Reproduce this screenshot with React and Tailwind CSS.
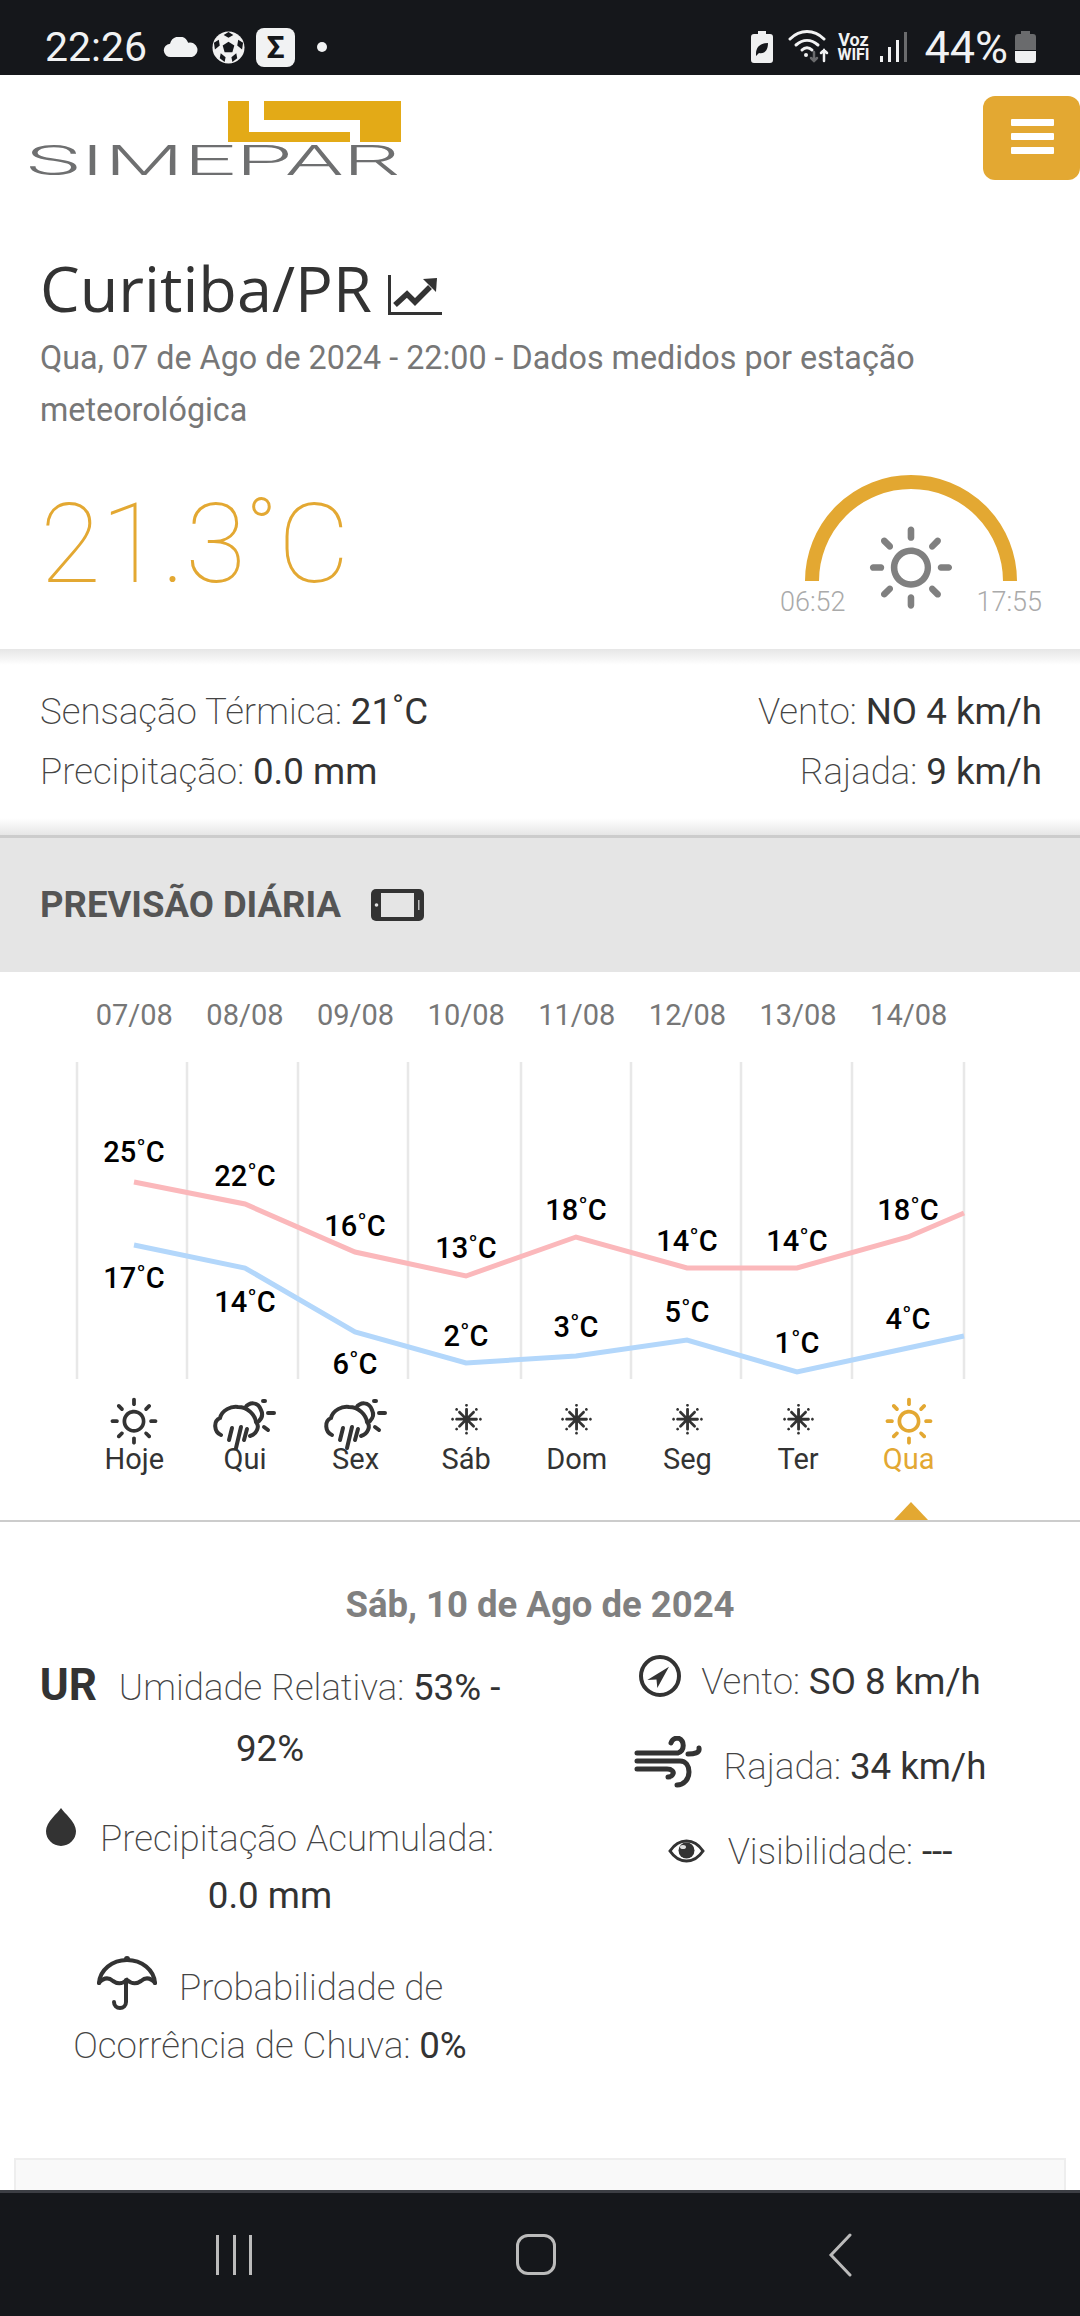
import { WiDaySunny, WiSnowflakeCold } from 'react-icons/wi';

const DATES = ['07/08', '08/08', '09/08', '10/08', '11/08', '12/08', '13/08', '14/08'];
const GRID_X = [77, 187, 298, 408, 521, 631, 741, 852, 964];
const XS = [134, 245, 355, 466, 576, 687, 797, 908];
const RED = [1182, 1204, 1252, 1276, 1237, 1268, 1268, 1237];
const BLUE = [1245, 1268, 1332, 1363, 1356, 1340, 1372, 1348];
const HIGHS = [
  ['25', 1162], ['22', 1186], ['16', 1236], ['13', 1258],
  ['18', 1220], ['14', 1251], ['14', 1251], ['18', 1220],
];
const LOWS = [
  ['17', 1288], ['14', 1312], ['6', 1374], ['2', 1346],
  ['3', 1337], ['5', 1322], ['1', 1353], ['4', 1329],
];
const DAYS = [
  ['Hoje', 'sun'], ['Qui', 'rain'], ['Sex', 'rain'], ['Sáb', 'cold'],
  ['Dom', 'cold'], ['Seg', 'cold'], ['Ter', 'cold'], ['Qua', 'sun'],
];

const toPoints = (ys, endY) =>
  XS.map((x, i) => `${x},${ys[i] - 1040}`).join(' ') + ` 964,${endY - 1040}`;

function Logo() {
  return (
    <svg width="380" height="90" viewBox="25 100 380 90" className="block">
      <path d="M228 101H249V132H350V142H228Z" fill="#e3aa17" />
      <path d="M264 101H401V142H360V120H264Z" fill="#e3aa17" />
      <text
        x="26"
        y="175"
        textLength="375"
        lengthAdjust="spacingAndGlyphs"
        fontFamily="Roboto, sans-serif"
        fontWeight="300"
        fontSize="42"
        fill="#6e6f70"
      >
        SIMEPAR
      </text>
    </svg>
  );
}

function SoccerBall() {
  return (
    <svg width="33" height="33" viewBox="0 0 34 34">
      <circle cx="17" cy="17" r="16.500" fill="#f1f1f1" />
      <path d="M17 11l6 4-2 7h-8l-2-7z" fill="#15171b" />
      <path d="M17 1l5 3-5 3-5-3zM2 12l5-3 1 6-5 4zM32 12l-5-3-1 6 5 4zM8 28l1-5 5 4-1 5zM26 28l-1-5-5 4 1 5z" fill="#15171b" />
    </svg>
  );
}

function StatusBar() {
  return (
    <div className="flex h-[75px] shrink-0 items-center bg-[#15171b] pl-[45px] pr-[44px] pt-[19px] text-[#f1f2f3]">
      <span className="text-[41px] leading-none font-normal">22:26</span>
      <svg width="36" height="21" viewBox="0 0 37 22" className="ml-[16px]">
        <path d="M8 21a7 7 0 0 1-1-14 10 10 0 0 1 19-1 7.500 7.500 0 0 1 4 15z" fill="#f1f2f3" />
      </svg>
      <div className="ml-[13px]"><SoccerBall /></div>
      <div className="ml-[11px] flex h-[39px] w-[39px] items-center justify-center rounded-[8px] bg-[#f1f2f3] text-[32px] leading-none font-bold text-[#15171b]">Σ</div>
      <div className="ml-[22px] h-[10px] w-[10px] rounded-full bg-[#f1f2f3]" />
      <div className="ml-auto flex items-center">
        <svg width="22" height="32" viewBox="0 0 22 32">
          <path d="M7 0h8v3h4a3 3 0 0 1 3 3v23a3 3 0 0 1-3 3H3a3 3 0 0 1-3-3V6a3 3 0 0 1 3-3h4z" fill="#eff0f1" />
          <path d="M5 23c0-8 5-11 12-11 0 8-4 11-9 10l-3 3" fill="#15171b" />
        </svg>
        <svg width="42" height="34" viewBox="0 0 42 34" fill="none" stroke="#f1f2f3" strokeLinecap="round" className="ml-[15px]">
          <path d="M2 9c10-10 24-10 34 0" strokeWidth="3" />
          <path d="M8 15c7-6 15-6 22 0" strokeWidth="3" />
          <path d="M14 20c3-3 7-3 10 0" strokeWidth="3" />
          <circle cx="18" cy="25" r="2" fill="#f1f2f3" stroke="none" />
          <path d="M26 22v9M23 28l3 3 3-3" stroke="#6a6b6d" strokeWidth="2.500" />
          <path d="M36 31v-11M33 23l3-3 3 3" strokeWidth="2.500" />
        </svg>
        <div className="ml-[7px] flex w-[32px] flex-col items-center text-[16px] leading-[15px] font-bold">
          <span className="text-[18px]">Voz</span>
          <span>WIFI</span>
        </div>
        <div className="ml-[11px] flex h-[30px] items-end gap-[5px]">
          <div className="h-[6px] w-[3px] bg-[#f1f2f3]" />
          <div className="h-[15px] w-[3px] bg-[#f1f2f3]" />
          <div className="h-[22px] w-[3px] bg-[#f1f2f3]" />
          <div className="h-[30px] w-[3px] bg-[#6a6b6d]" />
        </div>
        <span className="ml-[17px] text-[45px] leading-none font-normal">44%</span>
        <svg width="21" height="32" viewBox="0 0 21 32" className="ml-[7px]">
          <path d="M6 0h9v3h3a3 3 0 0 1 3 3v13H0V6a3 3 0 0 1 3-3h3z" fill="#6a6b6d" />
          <path d="M0 20h21v9a3 3 0 0 1-3 3H3a3 3 0 0 1-3-3z" fill="#eff0f1" />
        </svg>
      </div>
    </div>
  );
}

function SunArc() {
  return (
    <div className="relative h-[146px] w-[262px]">
      <svg width="262" height="146" viewBox="0 0 262 146" className="absolute inset-0">
        <path d="M32 107a99 99 0 0 1 198 0" fill="none" stroke="#e3a832" strokeWidth="14" />
      </svg>
      <WiDaySunny size={116} color="#808080" className="absolute left-[73px] top-[37px]" />
      <span className="absolute left-0 top-[113px] text-[27px] leading-[30px] font-light text-[#aaa]">06:52</span>
      <span className="absolute right-0 top-[113px] text-[27px] leading-[30px] font-light text-[#aaa]">17:55</span>
    </div>
  );
}

function Chart() {
  return (
    <svg width="1080" height="345" viewBox="0 0 1080 345" className="block">
      {GRID_X.map((x) => (
        <line key={x} x1={x} x2={x} y1="22" y2="339" stroke="#e8e8e8" strokeWidth="2.500" />
      ))}
      <polyline points={toPoints(RED, 1213)} fill="none" stroke="#fbb8bb" strokeWidth="5" />
      <polyline points={toPoints(BLUE, 1336)} fill="none" stroke="#b3d7fb" strokeWidth="5" />
      {[...HIGHS, ...LOWS].map(([t, y], i) => (
        <text key={i} x={XS[i % 8]} y={y - 1040} textAnchor="middle" fontFamily="Roboto, sans-serif" fontWeight="500" fontSize="29" fill="#000">
          {t}˚C
        </text>
      ))}
    </svg>
  );
}

function RainIcon() {
  return (
    <svg width="90" height="70" viewBox="0 0 90 70" fill="none" stroke="#333" strokeWidth="4" strokeLinecap="round" className="shrink-0">
      <path d="M21 45C14 42 13 31 20 28 22 20 31 16 38 17 48 17 55 25 56 32 60 36 57 44 50 46" />
      <path d="M45 18C49 12 58 11 61 20 63 24 62 28 59 31" />
      <path d="M68 23h6M64 37l4 3M63 11h2" />
      <path d="M29 50l3-12M36 58l5-21M44 50l3-11" />
    </svg>
  );
}

function DayIcon({ kind, color }) {
  if (kind === 'sun') return <WiDaySunny size={66} color={color} className="mt-[4px] shrink-0" />;
  if (kind === 'rain') return <div className="mt-[5px]"><RainIcon /></div>;
  return <WiSnowflakeCold size={61} color={color} className="mt-[5px] shrink-0" />;
}

function Val({ children }) {
  return <span className="font-normal text-[#333]">{children}</span>;
}

export default function App() {
  return (
    <div className="flex h-[2316px] w-[1080px] flex-col overflow-hidden bg-white font-['Roboto',sans-serif] text-[#333]">
      <StatusBar />

      <main className="flex-1 overflow-hidden">
        <header className="flex h-[172px] items-start justify-between">
          <div className="ml-[25px] mt-[25px]"><Logo /></div>
          <div className="mt-[21px] flex h-[84px] w-[97px] flex-col gap-[7px] rounded-[12px] bg-[#e3a832] pl-[28px] pt-[23px]">
            <div className="h-[7px] w-[43px] rounded-[1px] bg-white" />
            <div className="h-[7px] w-[43px] rounded-[1px] bg-white" />
            <div className="h-[7px] w-[43px] rounded-[1px] bg-white" />
          </div>
        </header>

        <section className="px-[40px]">
          <h1 className="flex items-center font-['Open_Sans',sans-serif] text-[63px] leading-[82px] text-[#333]">
            Curitiba/PR
            <svg width="54" height="40" viewBox="0 0 54 40" className="ml-[16px] mt-[14px]">
              <path d="M1.500 0V38.500H54" fill="none" stroke="#333" strokeWidth="3" />
              <path d="M7 30l12-11 8 8 15-15" fill="none" stroke="#333" strokeWidth="5.500" />
              <path d="M35 4l14-1-1 14z" fill="#333" />
            </svg>
          </h1>
          <p className="mt-[3px] w-[960px] text-[32.300px] leading-[52px] text-[#777]">
            Qua, 07 de Ago de 2024 - 22:00 - Dados medidos por estação meteorológica
          </p>
        </section>

        <section className="flex h-[213px] items-start justify-between pl-[40px] pr-[38px]">
          <div className="mt-[33px] text-[111px] leading-[150px] font-thin text-[#e3a832]">21.3˚C</div>
          <div className="mt-[38px]"><SunArc /></div>
        </section>

        <div className="h-[16px] bg-gradient-to-b from-[#e6e6e6] to-white" />

        <section className="flex justify-between pl-[40px] pr-[38px] pt-[17px] text-[36.700px] leading-[60px] font-extralight text-[#444]">
          <div>
            <div>Sensação Térmica: <Val>21˚C</Val></div>
            <div>Precipitação: <Val>0.0 mm</Val></div>
          </div>
          <div className="text-right">
            <div>Vento: <Val>NO 4 km/h</Val></div>
            <div>Rajada: <Val>9 km/h</Val></div>
          </div>
        </section>

        <div className="mt-[16px] h-[17px] bg-gradient-to-b from-white to-[#e6e6e6]" />

        <section className="flex h-[137px] items-center border-t-[3px] border-[#ccc] bg-[#e5e5e5] pl-[40px]">
          <h2 className="text-[36.500px] font-bold text-[#555]">PREVISÃO DIÁRIA</h2>
          <svg width="53" height="32" viewBox="0 0 53 32" className="ml-[30px]">
            <rect width="53" height="32" rx="5" fill="#333" />
            <rect x="10" y="4" width="33" height="24" fill="#e5e5e5" />
            <circle cx="5.500" cy="16" r="1.800" fill="#e5e5e5" />
            <rect x="47" y="11" width="1.500" height="10" fill="#bbb" />
          </svg>
        </section>

        <div className="ml-[79px] mb-[5px] mt-[23px] grid w-[885px] grid-cols-8 text-center text-[29px] leading-[40px] text-[#777]">
          {DATES.map((d) => <span key={d}>{d}</span>)}
        </div>

        <Chart />

        <div className="ml-[79px] grid w-[885px] grid-cols-8 text-center text-[29px] leading-[34px]">
          {DAYS.map(([label, kind], i) => {
            const last = i === DAYS.length - 1;
            return (
              <div key={label} className={`flex flex-col items-center ${last ? 'text-[#e3a832]' : 'text-[#333]'}`}>
                <div className="flex h-[57px] w-[60px] items-start justify-center">
                  <DayIcon kind={kind} color={last ? '#e3a832' : '#333'} />
                </div>
                <span className="relative">{label}</span>
              </div>
            );
          })}
        </div>

        <div className="relative mt-[44px] border-b-[2px] border-[#ccc]">
          <div className="absolute bottom-0 left-[894px] h-0 w-0 border-x-[17px] border-b-[18px] border-x-transparent border-b-[#e3a832]" />
        </div>

        <h3 className="mt-[61px] text-center text-[36.500px] leading-[44px] font-bold text-[#808080]">Sáb, 10 de Ago de 2024</h3>

        <section className="mt-[28px] grid grid-cols-2 text-center text-[36.700px] font-extralight text-[#444]">
          <div className="px-[30px]">
            <div className="leading-[61px]">
              <b className="mr-[22px] text-[44px] font-bold text-[#333]">UR</b>Umidade Relativa: <Val>53% -<br />92%</Val>
            </div>
            <div className="mt-[31px] leading-[57px]">
              <svg width="30" height="38" viewBox="0 0 30 38" className="-my-[8px] mr-[24px] inline-block align-[13px]">
                <path d="M15 0C18 5 30 14 30 23A15 15 0 0 1 0 23C0 14 12 5 15 0Z" fill="#333" />
              </svg>
              Precipitação Acumulada:<br /><Val>0.0 mm</Val>
            </div>
            <div className="mt-[35px] leading-[58px]">
              <svg width="60" height="55" viewBox="0 0 60 55" fill="none" stroke="#333" strokeWidth="4" strokeLinecap="round" className="-my-[13px] mr-[22px] inline-block align-[2.500px]">
                <path d="M2 27C3 14 15 4 30 4 45 4 57 14 58 27" />
                <path d="M2 27Q9 19 16 25 23 30 30 24 37 30 44 25 51 19 58 27" />
                <path d="M29 24V46A6 6 0 0 1 17 46" />
                <circle cx="30" cy="3" r="1" />
              </svg>
              Probabilidade de<br />Ocorrência de Chuva: <Val>0%</Val>
            </div>
          </div>
          <div className="-mt-[3px] flex flex-col items-center gap-[25px]">
            <div className="flex h-[60px] items-center gap-[20px]">
              <svg width="42" height="42" viewBox="0 0 42 42" className="-mt-[12px]">
                <circle cx="21" cy="21" r="19" fill="none" stroke="#333" strokeWidth="4" />
                <path d="M30 11.700L8.300 25l9.200-.5.800 8.500z" fill="#333" />
              </svg>
              <span>Vento: <Val>SO 8 km/h</Val></span>
            </div>
            <div className="flex h-[60px] items-center gap-[22px]">
              <svg width="68" height="52" viewBox="0 0 68 52" fill="none" stroke="#333" strokeWidth="5" strokeLinecap="round" className="-mt-[10px]">
                <path d="M3 17H44a8 8 0 0 0 0-15c-4 0-6 2-7 5" />
                <path d="M3 25H46c6 0 9 5 9 11 0 7-5 13-12 13" />
                <path d="M3 33H33c5 0 7 3 6 5-1 2-3 3-5 3" />
                <path d="M54 18c6 0 12-1 11-6" />
              </svg>
              <span>Rajada: <Val>34 km/h</Val></span>
            </div>
            <div className="flex h-[60px] items-center gap-[23px]">
              <svg width="37" height="24" viewBox="0 0 37 24" className="-mt-[2px]">
                <path d="M2 12C8 3 14 2 18.500 2 23 2 29 3 35 12 29 21 23 22 18.500 22 14 22 8 21 2 12Z" fill="#fff" stroke="#333" strokeWidth="3" />
                <circle cx="18.500" cy="11.500" r="8" fill="#333" />
                <ellipse cx="15" cy="8" rx="3" ry="2" fill="#ddd" />
              </svg>
              <span>Visibilidade: <Val>---</Val></span>
            </div>
          </div>
        </section>

        <div className="mx-[14px] mt-[83px] h-[60px] border-2 border-[#eee] bg-[#f9f9f9]" />
      </main>

      <nav className="flex h-[126px] shrink-0 items-center border-t-[3px] border-[#3c3e44] bg-[#15171b]">
        <div className="ml-[216px] flex h-[40px] gap-[13.500px]">
          <div className="w-[3px] bg-[#bbb]" />
          <div className="w-[3px] bg-[#bbb]" />
          <div className="w-[3px] bg-[#bbb]" />
        </div>
        <div className="ml-[264px] h-[41px] w-[40px] rounded-[12px] border-[3px] border-[#bbb]" />
        <svg width="24" height="44" viewBox="0 0 24 44" fill="none" stroke="#bbb" strokeWidth="3" strokeLinecap="round" className="ml-[272px]">
          <path d="M22 2L3 22l19 20" />
        </svg>
      </nav>
    </div>
  );
}
